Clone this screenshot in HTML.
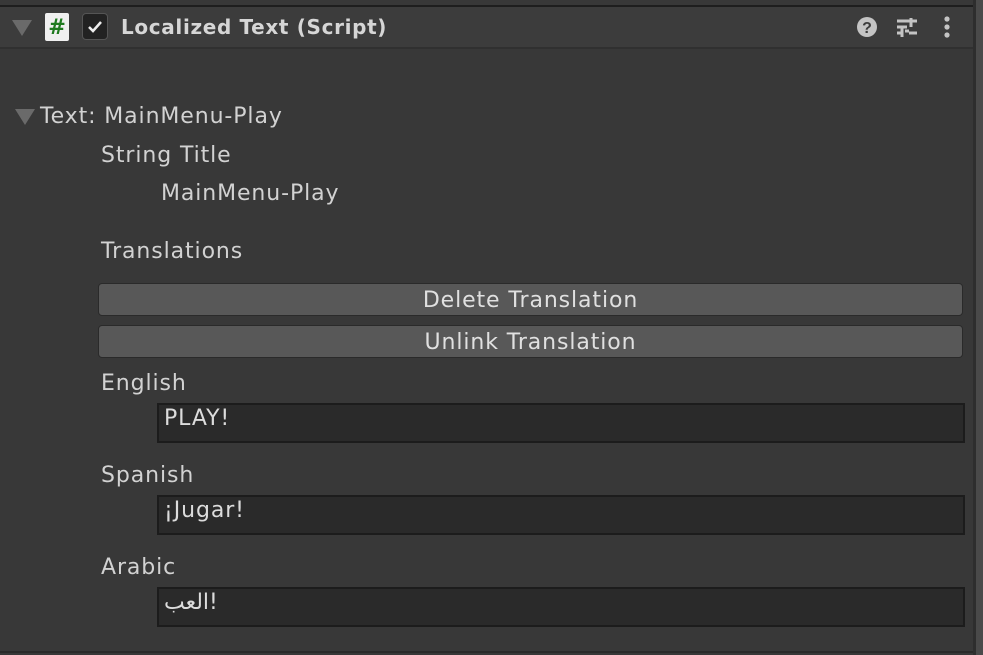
<!DOCTYPE html><html><head><style>
body{margin:0;width:983px;height:655px;background:#383838;position:relative;overflow:hidden;font-family:"DejaVu Sans","Liberation Sans",sans-serif;color:#d2d2d2}
.a{position:absolute}
.t{font-size:22px;letter-spacing:0.9px;white-space:nowrap}
.btn{position:absolute;left:98px;width:865px;height:33px;background:#585858;border:1px solid #2a2a2a;border-radius:4px;box-sizing:border-box;text-align:center;line-height:33px;font-size:22px;letter-spacing:0.9px;color:#e0e0e0}
.fld{position:absolute;left:157px;width:808px;height:40px;background:#2a2a2a;border:2px solid #1c1c1c;box-sizing:border-box;font-size:22px;letter-spacing:0.9px;color:#dcdcdc;padding-left:5px;line-height:28px}
.tri{position:absolute;width:0;height:0;border-left:10px solid transparent;border-right:10px solid transparent;border-top:16px solid #6a6a6a}
</style></head><body>
<div class="a" style="left:0;top:5px;width:973px;height:2px;background:#1e1e1e"></div>
<div class="a" style="left:0;top:7px;width:973px;height:40px;background:#3c3c3c"></div>
<div class="a" style="left:0;top:47px;width:973px;height:2px;background:#303030"></div>
<div class="a" style="left:973px;top:0;width:3px;height:655px;background:#2e2e2e"></div>
<div class="a" style="left:976px;top:0;width:7px;height:655px;background:#4a4a4a"></div>
<div class="a" style="left:0;top:651px;width:973px;height:2px;background:#2a2a2a"></div>
<div class="tri" style="left:12px;top:20px"></div>
<div class="a" style="left:45px;top:13px;width:24px;height:28px;background:#f0f0f0;border-radius:2px;color:#1e7a1e;font-weight:bold;font-size:21px;text-align:center;line-height:28px">#</div>
<div class="a" style="left:82px;top:13px;width:26px;height:27px;background:#222;border:1px solid #555;border-radius:4px;box-sizing:border-box"><svg width="24" height="25"><path d="M6 13l4 4 8-9" stroke="#eee" stroke-width="2.5" fill="none"/></svg></div>
<div class="a" style="left:121px;top:15px;font-weight:bold;color:#d6d6d6;font-size:20px;letter-spacing:0.65px;white-space:nowrap">Localized Text (Script)</div>
<svg class="a" style="left:855px;top:15px" width="110" height="26"><circle cx="12" cy="12" r="10" fill="#c4c4c4"/><text x="12" y="18" font-size="16" font-weight="bold" text-anchor="middle" fill="#3c3c3c" font-family="Liberation Sans">?</text>
<path d="M42 6h20M42 12h10M50 16h4M42 18h6M54 18h8M56 3v9M47 12v10" stroke="#c4c4c4" stroke-width="3"/>
<circle cx="92" cy="4" r="2.6" fill="#c4c4c4"/><circle cx="92" cy="12" r="2.6" fill="#c4c4c4"/><circle cx="92" cy="20" r="2.6" fill="#c4c4c4"/></svg>
<div class="tri" style="left:15px;top:109px"></div>
<div class="a t" style="left:40px;top:104px">Text: MainMenu-Play</div>
<div class="a t" style="left:101px;top:143px">String Title</div>
<div class="a t" style="left:161px;top:181px">MainMenu-Play</div>
<div class="a t" style="left:101px;top:239px">Translations</div>
<div class="btn" style="top:283px">Delete Translation</div>
<div class="btn" style="top:325px">Unlink Translation</div>
<div class="a t" style="left:101px;top:371px">English</div>
<div class="fld" style="top:403px">PLAY!</div>
<div class="a t" style="left:101px;top:463px">Spanish</div>
<div class="fld" style="top:495px">¡Jugar!</div>
<div class="a t" style="left:101px;top:555px">Arabic</div>
<div class="fld" style="top:587px">العب!</div>
</body></html>
